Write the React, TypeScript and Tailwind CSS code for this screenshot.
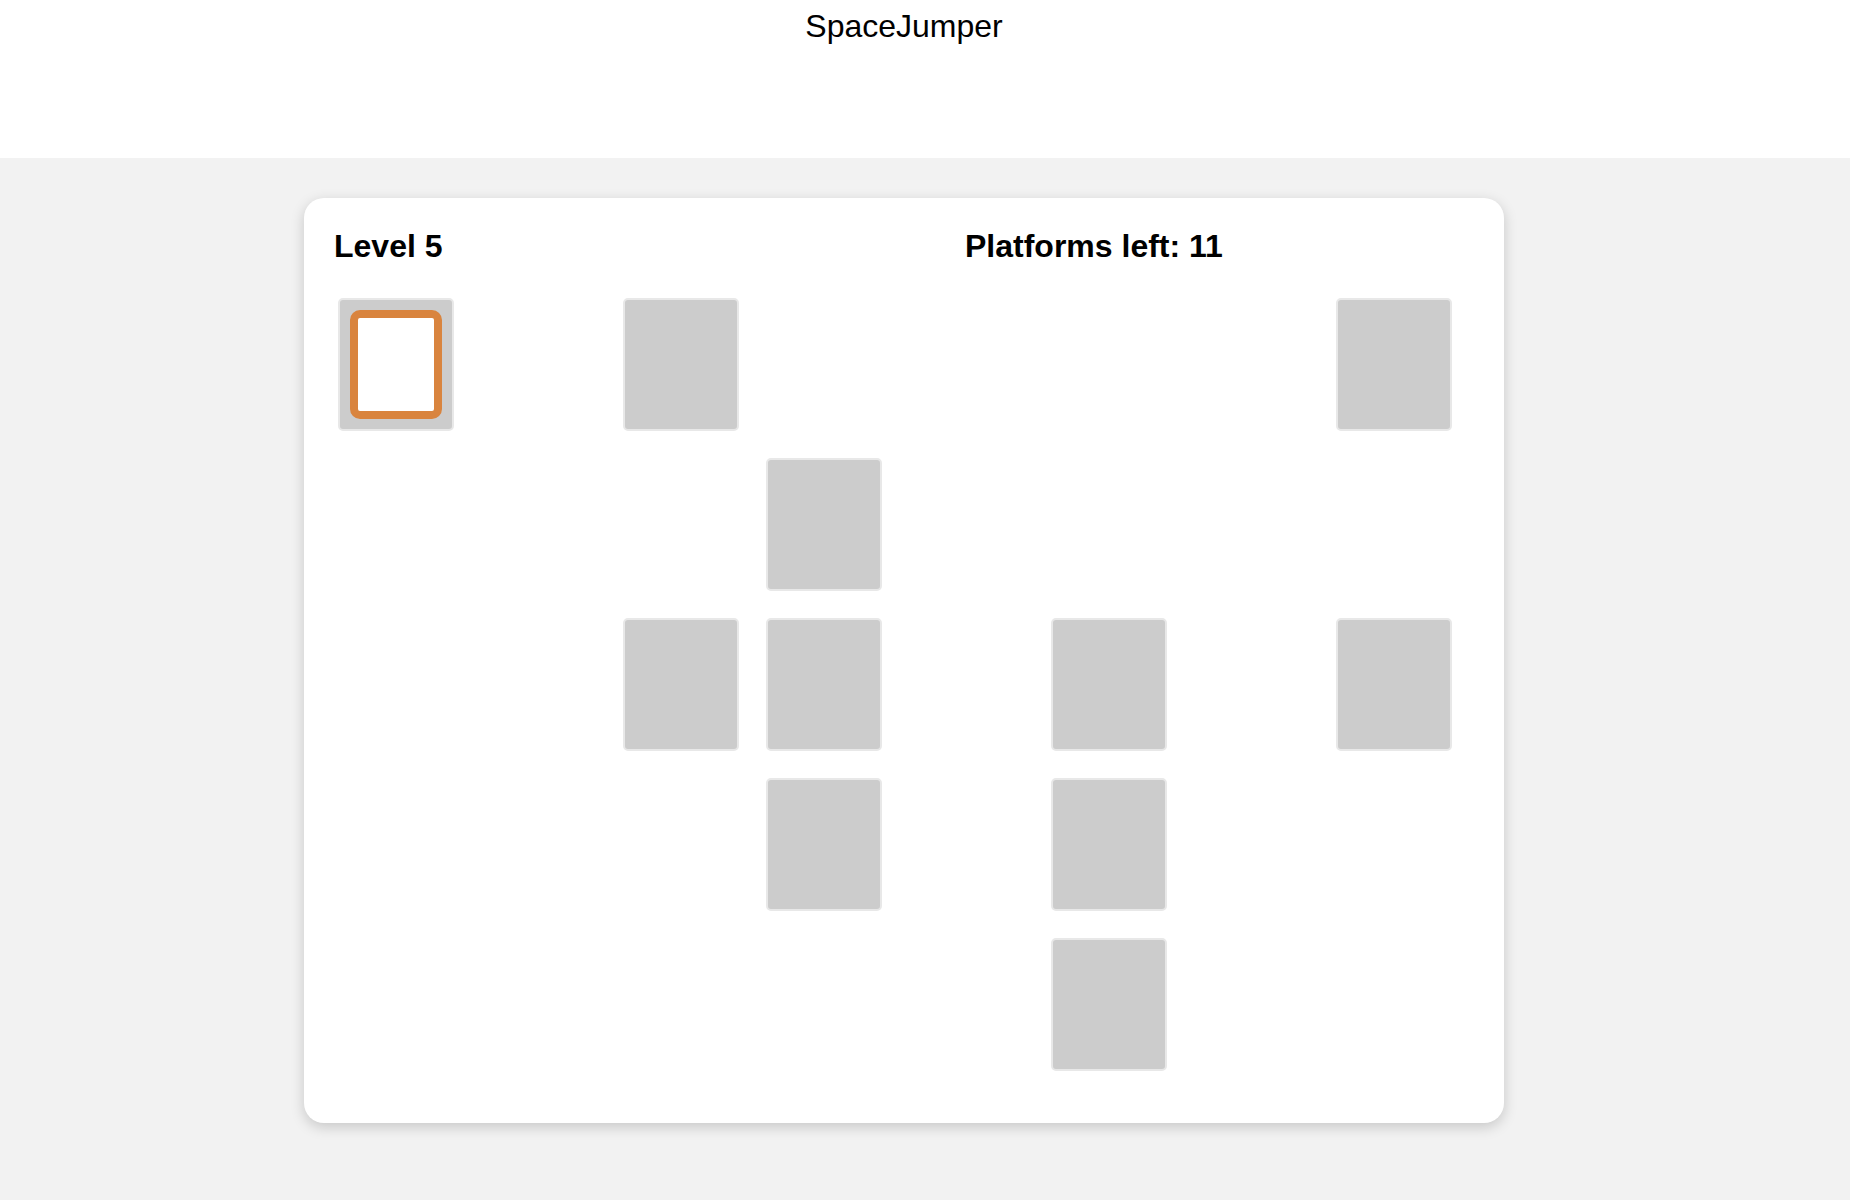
import React from "react";

const cells: { c: number; r: number; player?: boolean }[] = [
  { c: 0, r: 0, player: true },
  { c: 2, r: 0 },
  { c: 7, r: 0 },
  { c: 3, r: 1 },
  { c: 2, r: 2 },
  { c: 3, r: 2 },
  { c: 5, r: 2 },
  { c: 7, r: 2 },
  { c: 3, r: 3 },
  { c: 5, r: 3 },
  { c: 5, r: 4 },
];

export default function App() {
  const grid: React.ReactNode[] = [];
  for (let r = 0; r < 5; r++) {
    for (let c = 0; c < 8; c++) {
      const cell = cells.find((x) => x.c === c && x.r === r);
      if (!cell) {
        grid.push(<div key={`${r}-${c}`} className="h-[133px] w-[116px]" />);
      } else {
        grid.push(
          <div
            key={`${r}-${c}`}
            className="h-[133px] w-[116px] rounded-[5px] border-2 border-[#e8e8e8] bg-[#cccccc] p-[10px]"
          >
            {cell.player && (
              <div className="h-full w-full rounded-[10px] border-[8px] border-[#d9843e] bg-white" />
            )}
          </div>
        );
      }
    }
  }

  return (
    <div
      className="min-h-[1200px] w-full bg-[#f2f2f2] text-black"
      style={{ fontFamily: '"Liberation Sans", Arial, sans-serif' }}
    >
      <div className="h-[158px] w-full bg-white">
        <div className="w-[1808px] pt-[8px] text-center text-[32px] leading-[37px]">
          SpaceJumper
        </div>
      </div>
      <div className="flex w-[1808px] justify-center pt-[40px]">
        <div className="h-[925px] w-[1200px] rounded-[20px] bg-white px-[30px] pt-[30px] shadow-[0_4px_14px_rgba(0,0,0,0.18)]">
          <div className="flex text-[32px] font-bold leading-[37px]">
            <div className="w-[631px]">Level 5</div>
            <div>Platforms left: 11</div>
          </div>
          <div className="ml-[4px] mt-[33px] grid grid-cols-[repeat(8,116px)] gap-x-[26.5px] gap-y-[27px]">
            {grid}
          </div>
        </div>
      </div>
    </div>
  );
}
